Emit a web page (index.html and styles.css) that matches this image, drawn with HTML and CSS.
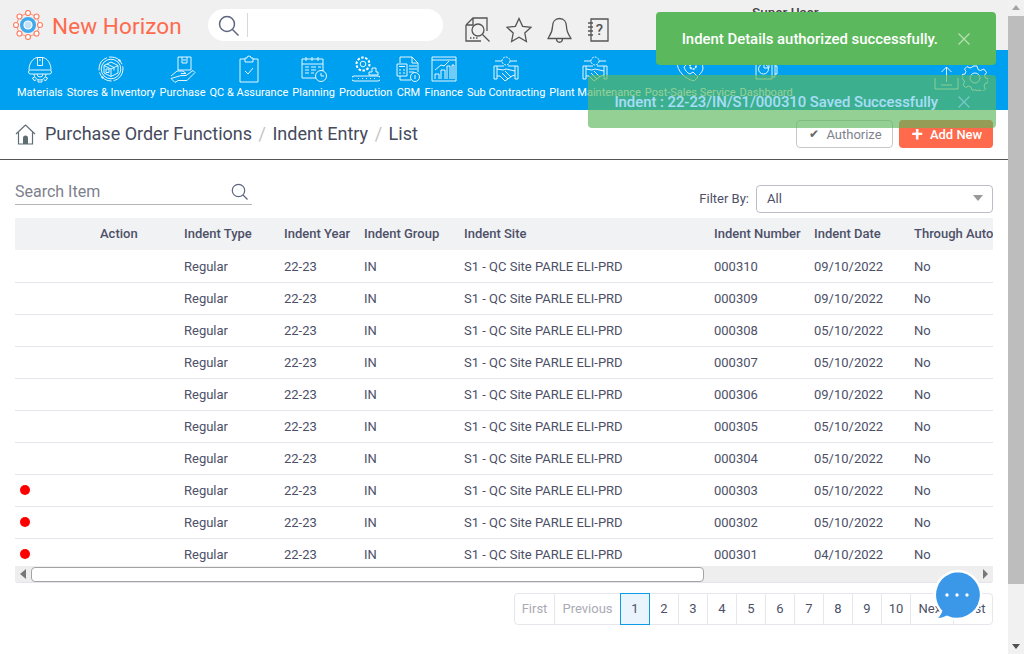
FILE: index.html
```html
<!DOCTYPE html>
<html lang="en">
<head>
    <meta charset="UTF-8">
    <title>Indent Entry</title>
    <link rel="stylesheet" href="styles.css">
</head>
<body>
<div class="window">
<div class="page">
    <header class="topbar">
        <div class="logo">
            <svg width="30" height="30" viewBox="0 0 30 30" fill="#fff" stroke="#ff7f66" stroke-width="1.200">
                <path d="M15 3L23.500 6.500 27 15 23.500 23.500 15 27 6.500 23.500 3 15 6.500 6.500z" fill="none" stroke-width=".8"/>
                <circle cx="15" cy="3" r="2.500"/><circle cx="23.500" cy="6.500" r="2.500"/><circle cx="27" cy="15" r="2.500"/><circle cx="23.500" cy="23.500" r="2.500"/><circle cx="15" cy="27" r="2.500"/><circle cx="6.500" cy="23.500" r="2.500"/><circle cx="3" cy="15" r="2.500"/><circle cx="6.500" cy="6.500" r="2.500"/>
                <circle cx="15" cy="15" r="8" fill="#3fa9ec" stroke="none"/>
                <circle cx="15" cy="15" r="4" fill="#bfe2f8" stroke="#fff" stroke-width="1.200"/>
            </svg>
            <span class="logo-name">New Horizon</span>
        </div>
        <div class="top-search">
            <svg width="21" height="21" viewBox="0 0 21 21" fill="none" stroke="#5f6580" stroke-width="1.500"><circle cx="9" cy="9" r="7.500"/><path d="M14.500 14.500l6 6"/></svg>
            <span class="top-search-line"></span>
        </div>
        <div class="top-icons">
            <svg width="26" height="26" viewBox="0 0 26 26" fill="none" stroke="#555" stroke-width="1.300"><path d="M1 8L8 1h14v13M1 8v16h15M8 1v7H1"/><circle cx="13" cy="13" r="6"/><path d="M17.500 17.500l7 7M5 21h1.500M8 21h1.500M11 21h1.500"/></svg>
            <svg width="26" height="26" viewBox="0 0 26 26" fill="none" stroke="#555" stroke-width="1.300"><path d="M13 1.500l3.600 7.800 8.400 1-6.200 5.800 1.600 8.400-7.400-4.200-7.400 4.200 1.600-8.400L1 10.300l8.400-1z"/></svg>
            <svg width="25" height="26" viewBox="0 0 25 26" fill="none" stroke="#555" stroke-width="1.300"><path d="M12.500 1.500c-4.500 0-7 3.500-7 8 0 7-4.500 11-4.500 12h23c0-1-4.500-5-4.500-12 0-4.500-2.500-8-7-8zM9.500 21.500c0 5 6 5 6 0"/></svg>
            <svg width="22" height="26" viewBox="0 0 22 26" fill="none" stroke="#555" stroke-width="1.300"><path d="M4 2h17v22H4zM1 6h5M1 10h5M1 14h5M1 18h5"/><text class="note-mark" x="12.500" y="18" text-anchor="middle">?</text></svg>
        </div>
        <div class="user-name">Super User</div>
    </header>

    <nav class="modules">
        <div class="module-list">
            <a class="module">
                <svg width="28" height="28" viewBox="0 0 28 28"><path d="M3 15c0-7 4-12 8.500-12.500h5C21 3 25 8 25 15"/><path d="M11.500 2.500h5v8h-5zM13 5h2"/><rect x="2.500" y="15" width="23" height="4" rx="2"/><path d="M8 19a6 6 0 0 0 12 0M8.500 22l-2 1 1.500 2.500 2-.500M19.500 22l2 1-1.500 2.500-2-.500M12 25v2h4v-2M11 19a3 3 0 0 0 6 0"/></svg>
                <span>Materials</span>
            </a>
            <a class="module">
                <svg width="28" height="28" viewBox="0 0 28 28"><circle cx="14" cy="14" r="12" stroke-dasharray="16 2"/><circle cx="14" cy="14" r="9.800"/><path d="M14 7l7 3.500v7.500l-7 3.500-7-3.500v-7.500zM7 10.500l7 3.500 7-3.500M14 14v7.500M10 9l7 3.500v3M9 14h3v3.500H9z"/><circle cx="22.500" cy="5.500" r=".8"/><circle cx="5.500" cy="22.500" r=".8"/></svg>
                <span>Stores &amp; Inventory</span>
            </a>
            <a class="module">
                <svg width="28" height="28" viewBox="0 0 28 28"><path d="M9 2h13v13H9zM13 2v6h5V2M14 5h3M2 21l6-5h6l3 2.500h-5M12 20.500h5l7-5 2 2-8 8H9l-3 2-4-4z"/></svg>
                <span>Purchase</span>
            </a>
            <a class="module">
                <svg width="28" height="28" viewBox="0 0 28 28"><path d="M10 4H5v23h18V4h-5M10 7h8V3h-2a2 2 0 0 0-4 0h-2zM10 16l3 3 5-6"/></svg>
                <span>QC &amp; Assurance</span>
            </a>
            <a class="module">
                <svg width="28" height="28" viewBox="0 0 28 28"><path d="M16 23H2V4h21v12M2 9h21M6 2v4M12 2v4M18 2v4M5 12h4M11 12h5M18 12h3M5 15h4M11 15h5M5 18h4M11 18h3"/><circle cx="21" cy="21" r="5.500"/><path d="M21 18v3h3"/></svg>
                <span>Planning</span>
            </a>
            <a class="module">
                <svg width="28" height="28" viewBox="0 0 28 28"><circle cx="11" cy="9" r="6.500" stroke-dasharray="2.500 1.500" stroke-width="2"/><circle cx="11" cy="9" r="2.800"/><path d="M17 17h3v-4h4v4h2v3H17zM2 21h24a2.500 2.500 0 0 1 0 5H2a2.500 2.500 0 0 1 0-5zM6 23.500h1M10 23.500h1M14 23.500h1M18 23.500h1M22 23.500h1"/></svg>
                <span>Production</span>
            </a>
            <a class="module">
                <svg width="24" height="28" viewBox="0 0 24 28"><path d="M4 8V2h12l6 6v9M16 2v6h6M15 25H4v-4M1 9h10v12H1zM3 11.500h6M3 15h2M7 15h2M3 18h2M7 18h2M13 11h8M13 14h8M13 17h5"/><circle cx="19" cy="22" r="4.500"/><path d="M19 20v4"/></svg>
                <span>CRM</span>
            </a>
            <a class="module">
                <svg width="26" height="28" viewBox="0 0 26 28"><path d="M1 2h24v24H1zM1 5h24M4 24v-5h4v5M10 24V15h4v9M16 24V11h3v13M21 24V10h2v14M4 15l6-5 3 1 5-5"/></svg>
                <span>Finance</span>
            </a>
            <a class="module">
                <svg width="28" height="28" viewBox="0 0 28 28"><circle cx="14" cy="6" r="4" stroke-dasharray="2 1"/><path d="M3 6h7M18 6h7M2 11h10M16 11h10M2 11v13h3V11M23 11v13h3V11M5 14l6 1 3-1 9 2M5 21h3l5 5 7-5 3-1M10 18l6 6M13 16l6 6"/></svg>
                <span>Sub Contracting</span>
            </a>
            <a class="module">
                <svg width="28" height="28" viewBox="0 0 28 28"><circle cx="14" cy="6" r="4" stroke-dasharray="2 1"/><path d="M3 6h7M18 6h7M2 11h10M16 11h10M2 11v13h3V11M23 11v13h3V11M5 14l6 1 3-1 9 2M5 21h3l5 5 7-5 3-1M10 18l6 6M13 16l6 6"/></svg>
                <span>Plant Maintenance</span>
            </a>
            <a class="module">
                <svg width="28" height="28" viewBox="0 0 28 28"><path d="M1 7c0 9 8 17 17 19l4-4-5-5-3 2c-3-1-5-4-6-7l3-3-5-6zM14 4a10 10 0 0 1 13 9c0 3-2 5-4 7"/><circle cx="17" cy="11" r="3" stroke-dasharray="2 1" stroke-width="1.600"/></svg>
                <span>Post-Sales Service</span>
            </a>
            <a class="module">
                <svg width="28" height="28" viewBox="0 0 28 28"><path d="M4 2h16v22H4zM20 8h3v14h-3M23 11h2v8h-2"/><circle cx="11.500" cy="14" r="5"/><path d="M12 8h5v5h-5z"/></svg>
                <span>Dashboard</span>
            </a>
        </div>
        <div class="module-tools">
            <svg width="25" height="25" viewBox="0 0 25 25"><path d="M12.500 17V2M7.500 7l5-5 5 5M1 13v11h23V13M7 20h11"/></svg>
            <svg width="26" height="26" viewBox="0 0 26 26"><path d="M11 1h4l1 3.500 2.500 1L22 4l2.500 3.500-2 3 1 2.500 2.500.500v4l-3 1-1 2.500 1.500 3-3 2.500-3-1.500-2.500 1L14 25h-4l-1-3-2.500-1-3 1.500L1 20l1.500-3-1-2.500L0 13.500v-4l3-.500 1-2.500L2.500 4 5 1.500l3 1.500 2.500-1z"/><circle cx="13" cy="13" r="5"/></svg>
        </div>
    </nav>

    <div class="crumbs">
        <svg width="21" height="21" viewBox="0 0 21 21"><path d="M1 10L10.500 1 20 10M3.500 8.500V20h14V8.500" fill="none" stroke="#5f6c72" stroke-width="1.200"/><path d="M8 20v-6a2.500 2.500 0 0 1 5 0v6z" fill="#5f6c72"/></svg>
        <span class="crumb">Purchase Order Functions</span>
        <span class="crumb-sep">/</span>
        <span class="crumb">Indent Entry</span>
        <span class="crumb-sep">/</span>
        <span class="crumb">List</span>
        <div class="crumb-actions">
            <button class="btn-authorize"><span class="btn-tick">&#10004;</span>Authorize</button>
            <button class="btn-add"><span class="btn-plus">+</span>Add New</button>
        </div>
    </div>

    <main class="content">
        <div class="filters">
            <div class="search-item">
                <span>Search Item</span>
                <svg width="17" height="17" viewBox="0 0 17 17" fill="none" stroke="#5f6580" stroke-width="1.200"><circle cx="7.500" cy="7.500" r="6.200"/><path d="M12 12l4.500 4.500"/></svg>
            </div>
            <div class="filter-by">
                <label>Filter By:</label>
                <div class="select"><span>All</span><i class="caret"></i></div>
            </div>
        </div>

        <div class="table-box">
            <table>
                <thead>
                <tr>
                    <th class="col-dot"></th><th class="col-action">Action</th><th class="col-type">Indent Type</th><th class="col-year">Indent Year</th><th class="col-group">Indent Group</th><th class="col-site">Indent Site</th><th class="col-num">Indent Number</th><th class="col-date">Indent Date</th><th class="col-auto">Through Auto</th>
                </tr>
                </thead>
                <tbody>
                <tr><td></td><td></td><td>Regular</td><td>22-23</td><td>IN</td><td>S1 - QC Site PARLE ELI-PRD</td><td>000310</td><td>09/10/2022</td><td>No</td></tr>
                <tr><td></td><td></td><td>Regular</td><td>22-23</td><td>IN</td><td>S1 - QC Site PARLE ELI-PRD</td><td>000309</td><td>09/10/2022</td><td>No</td></tr>
                <tr><td></td><td></td><td>Regular</td><td>22-23</td><td>IN</td><td>S1 - QC Site PARLE ELI-PRD</td><td>000308</td><td>05/10/2022</td><td>No</td></tr>
                <tr><td></td><td></td><td>Regular</td><td>22-23</td><td>IN</td><td>S1 - QC Site PARLE ELI-PRD</td><td>000307</td><td>05/10/2022</td><td>No</td></tr>
                <tr><td></td><td></td><td>Regular</td><td>22-23</td><td>IN</td><td>S1 - QC Site PARLE ELI-PRD</td><td>000306</td><td>09/10/2022</td><td>No</td></tr>
                <tr><td></td><td></td><td>Regular</td><td>22-23</td><td>IN</td><td>S1 - QC Site PARLE ELI-PRD</td><td>000305</td><td>05/10/2022</td><td>No</td></tr>
                <tr><td></td><td></td><td>Regular</td><td>22-23</td><td>IN</td><td>S1 - QC Site PARLE ELI-PRD</td><td>000304</td><td>05/10/2022</td><td>No</td></tr>
                <tr><td><i class="dot"></i></td><td></td><td>Regular</td><td>22-23</td><td>IN</td><td>S1 - QC Site PARLE ELI-PRD</td><td>000303</td><td>05/10/2022</td><td>No</td></tr>
                <tr><td><i class="dot"></i></td><td></td><td>Regular</td><td>22-23</td><td>IN</td><td>S1 - QC Site PARLE ELI-PRD</td><td>000302</td><td>05/10/2022</td><td>No</td></tr>
                <tr><td><i class="dot"></i></td><td></td><td>Regular</td><td>22-23</td><td>IN</td><td>S1 - QC Site PARLE ELI-PRD</td><td>000301</td><td>04/10/2022</td><td>No</td></tr>
                </tbody>
            </table>
        </div>
        <div class="table-scroll">
            <i class="arrow-left"></i>
            <div class="table-thumb"></div>
            <i class="arrow-right"></i>
        </div>

        <div class="pager">
            <a class="off first">First</a><a class="off prev">Previous</a><a class="on">1</a><a>2</a><a>3</a><a>4</a><a>5</a><a>6</a><a>7</a><a>8</a><a>9</a><a>10</a><a class="next">Next</a><a class="last">Last</a>
        </div>
    </main>
</div>
<div class="page-scroll">
    <i class="arrow-up"></i>
    <div class="page-thumb"></div>
    <i class="arrow-down"></i>
</div>
</div>

<div class="toast toast-one">
    <span>Indent Details authorized successfully.</span>
    <svg class="toast-x" width="12" height="12" viewBox="0 0 12 12"><path d="M.5.500l11 11M11.500.500l-11 11"/></svg>
</div>
<div class="toast toast-two">
    <span>Indent : 22-23/IN/S1/000310 Saved Successfully</span>
    <svg class="toast-x" width="12" height="12" viewBox="0 0 12 12"><path d="M.5.500l11 11M11.500.500l-11 11"/></svg>
</div>

<div class="chat">
    <svg width="52" height="56" viewBox="0 0 52 56">
        <path d="M26 2a24 24 0 1 1-10 45.800C12 50 8 51 3 50c4-2 6-5 7-8A24 24 0 0 1 26 2z" fill="#3b97e8" stroke="#fff" stroke-width="2.500"/>
        <circle cx="16" cy="26" r="1.700" fill="#fff"/><circle cx="26" cy="26" r="1.700" fill="#fff"/><circle cx="36" cy="26" r="1.700" fill="#fff"/>
    </svg>
</div>
</body>
</html>
```

FILE: styles.css
```css
* {
    box-sizing: border-box;
}

html, body {
    margin: 0;
    height: 100%;
    overflow: hidden;
}

body {
    font-family: Roboto, "Liberation Sans", sans-serif;
    color: #4d5068;
    background: #fff;
}

.window {
    display: flex;
    height: 654px;
}

.page {
    width: 1008px;
    overflow: hidden;
}

/* top bar */
.topbar {
    position: relative;
    display: flex;
    align-items: center;
    height: 50px;
    background: #f0f0f0;
    padding-left: 13px;
}

.logo {
    display: flex;
    align-items: center;
    width: 195px;
    gap: 9px;
}

.logo-name {
    font-size: 22.500px;
    color: #ff6a4d;
    letter-spacing: .1px;
    margin-top: 2px;
}

.top-search {
    display: flex;
    align-items: center;
    width: 235px;
    height: 32px;
    background: #fff;
    border-radius: 16px;
    padding-left: 10px;
}

.top-search-line {
    width: 1px;
    height: 24px;
    margin-left: 8px;
    background: #d8d8d8;
}

.top-icons {
    display: flex;
    align-items: center;
    gap: 15px;
    margin: 10px 0 0 22px;
}

.note-mark {
    font-size: 15px;
    font-weight: 500;
    fill: #555;
    stroke: none;
}

.user-name {
    position: absolute;
    left: 752px;
    top: 4px;
    font-size: 13.500px;
    font-weight: 500;
    color: #444;
}

/* modules */
.modules {
    display: flex;
    justify-content: space-between;
    height: 60px;
    background: #00a0f0;
    padding: 5px 20px 0 17px;
}

.module-list {
    display: flex;
    gap: 4px;
}

.module {
    display: flex;
    flex-direction: column;
    align-items: center;
    color: #fff;
    font-size: 11px;
    white-space: nowrap;
}

.module span {
    margin-top: 3px;
}

.modules svg {
    fill: none;
    stroke: #fff;
    stroke-width: .9;
}

.module-tools {
    display: flex;
    align-items: flex-start;
    gap: 3px;
    margin-top: 10px;
}

/* breadcrumb */
.crumbs {
    display: flex;
    align-items: center;
    height: 50px;
    padding: 0 15px 1px;
    border-bottom: 1px solid #555;
    font-size: 18px;
    color: #454a5c;
}

.crumbs svg {
    margin-right: 9px;
}

.crumb, .crumb-sep {
    margin-bottom: 2px;
}

.crumb-sep {
    margin-left: 6.500px;
    margin-right: 6.500px;
    color: #c4c4c4;
}

.crumb-actions {
    display: flex;
    gap: 6px;
    margin-left: auto;
}

.crumb-actions button {
    display: flex;
    align-items: center;
    justify-content: center;
    height: 28px;
    border-radius: 4px;
    font-family: inherit;
    font-size: 13px;
    padding: 0 0 0 2px;
}

.btn-authorize {
    width: 97px;
    background: #fff;
    border: 1px solid #c9c9c9;
    color: #80838f;
}

.btn-tick {
    font-size: 12px;
    color: #666;
    margin-right: 7px;
}

.btn-add {
    width: 94px;
    background: #ff6a4d;
    border: none;
    color: #fff;
    font-weight: 500;
}

.btn-plus {
    font-size: 20px;
    line-height: 14px;
    margin-right: 7px;
}

/* list */
.content {
    padding: 0 15px;
}

.filters {
    display: flex;
    justify-content: space-between;
    align-items: flex-end;
    height: 53px;
    margin-bottom: 5px;
}

.search-item {
    display: flex;
    justify-content: space-between;
    align-items: center;
    width: 237px;
    height: 26px;
    padding-right: 4px;
    border-bottom: 1px solid #b5b5b5;
    font-size: 16px;
    color: #7d808c;
    margin-bottom: 8px;
}

.filter-by {
    display: flex;
    align-items: center;
    gap: 7px;
    font-size: 13px;
}

.filter-by label {
    margin-bottom: 2px;
}

.select {
    display: flex;
    justify-content: space-between;
    align-items: center;
    width: 237px;
    height: 28px;
    border: 1px solid #bcbccb;
    border-radius: 4px;
    padding: 0 9px 2px 10px;
}

.caret {
    border: 5px solid transparent;
    border-top: 6px solid #999;
    border-bottom: none;
}

.table-box {
    height: 348px;
    overflow: hidden;
}

table {
    width: 1100px;
    border-collapse: collapse;
    table-layout: fixed;
    font-size: 13px;
}

th {
    height: 32px;
    background: #f1f2f4;
    font-weight: 500;
    text-align: left;
    padding: 0 0 2px;
    white-space: nowrap;
    overflow: hidden;
}

td {
    height: 32px;
    padding: 1px 0 0;
    border-bottom: 1px solid #e4e4ea;
}

.col-dot { width: 85px; }
.col-action { width: 84px; }
.col-type { width: 100px; }
.col-year { width: 80px; }
.col-group { width: 100px; }
.col-site { width: 250px; }
.col-num { width: 100px; }
.col-date { width: 100px; }
.col-auto { width: 201px; }

.dot {
    display: block;
    width: 10px;
    height: 10px;
    margin: -2px 0 0 5px;
    border-radius: 50%;
    background: #f00;
}

.table-scroll {
    display: flex;
    align-items: center;
    height: 17px;
    background: #eee;
    border-bottom: 1px solid #e4e4ea;
    border-radius: 0 0 3px 3px;
}

.table-thumb {
    width: 673px;
    height: 15px;
    margin-left: 5px;
    background: #fff;
    border: 1px solid #a3a3a3;
    border-radius: 4px;
}

.arrow-left {
    margin-left: 5px;
    border: 5px solid transparent;
    border-left: none;
    border-right: 6px solid #777;
}

.arrow-right {
    margin-left: auto;
    margin-right: 5px;
    border: 5px solid transparent;
    border-right: none;
    border-left: 5px solid #777;
}

.pager {
    display: flex;
    justify-content: flex-end;
    margin-top: 10px;
    font-size: 13px;
}

.pager a {
    display: flex;
    align-items: center;
    justify-content: center;
    width: 30px;
    height: 32px;
    padding-bottom: 2px;
    border: 1px solid #e6e6ec;
    margin-left: -1px;
}

.pager a:first-child {
    border-radius: 4px 0 0 4px;
}

.pager a:last-child {
    border-radius: 0 4px 4px 0;
}

.pager .off {
    color: #a9abb5;
}

.pager .first {
    width: 41px;
}

.pager .prev {
    width: 67px;
}

.pager .next {
    width: 44px;
}

.pager .last {
    width: 40px;
}

.pager .on {
    position: relative;
    background: #e9f4fd;
    border-color: #0d9be8;
}

/* browser scrollbar */
.page-scroll {
    display: flex;
    flex-direction: column;
    align-items: center;
    width: 16px;
    background: #f1f1f1;
}

.page-thumb {
    width: 16px;
    height: 568px;
    margin-top: 6px;
    background: #bdbdbd;
}

.arrow-up {
    margin-top: 5px;
    border: 4px solid transparent;
    border-top: none;
    border-bottom: 5px solid #a3a3a3;
}

.arrow-down {
    margin-top: auto;
    margin-bottom: 5px;
    border: 4px solid transparent;
    border-bottom: none;
    border-top: 5px solid #505050;
}

/* things lying over the page */
.toast {
    position: absolute;
    display: flex;
    align-items: center;
    justify-content: flex-end;
    height: 53px;
    right: 28px;
    padding-right: 26px;
    background: #5cb85c;
    border-radius: 4px;
    color: #fff;
    font-size: 14.900px;
    font-weight: 500;
}

.toast-one {
    top: 12px;
    width: 340px;
}

.toast-two {
    top: 75px;
    width: 408px;
    opacity: .65;
    letter-spacing: -.04px;
}

.toast-x {
    margin-left: 20px;
    fill: none;
    stroke: rgba(255, 255, 255, .55);
    stroke-width: 1.300;
}

.chat {
    position: absolute;
    left: 931px;
    top: 569px;
    line-height: 0;
}
```
